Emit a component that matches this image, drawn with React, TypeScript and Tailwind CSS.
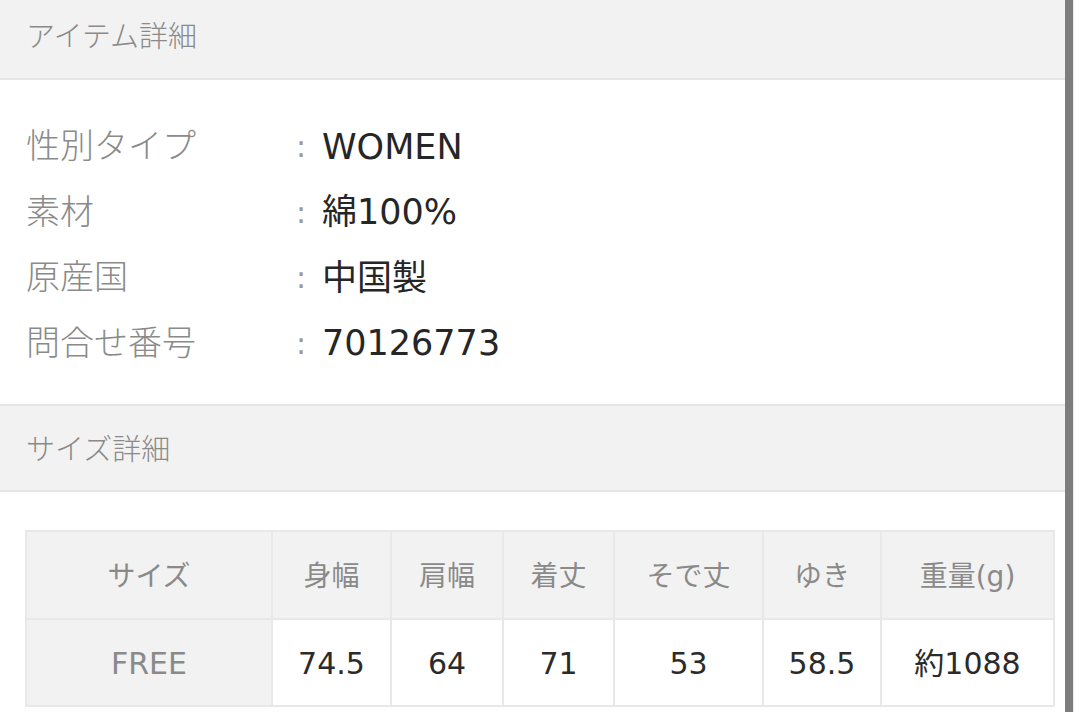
const details = [
  { label: '性別タイプ', value: 'WOMEN' },
  { label: '素材', value: '綿100%' },
  { label: '原産国', value: '中国製' },
  { label: '問合せ番号', value: '70126773' },
];

const columns = [
  { name: 'サイズ', w: 'w-[246px]' },
  { name: '身幅', w: 'w-[119px]' },
  { name: '肩幅', w: 'w-[112px]' },
  { name: '着丈', w: 'w-[111px]' },
  { name: 'そで丈', w: 'w-[149px]' },
  { name: 'ゆき', w: 'w-[118px]' },
  { name: '重量(g)', w: 'w-[173px]' },
];

const sizes = [['FREE', '74.5', '64', '71', '53', '58.5', '約1088']];

export default function App() {
  return (
    <div
      className="flex h-[712px] w-[1080px] overflow-hidden bg-white"
      style={{ fontFamily: '"DejaVu Sans", "Noto Sans CJK JP", sans-serif' }}
    >
      <main className="w-[1065px] shrink-0">
        <div className="flex h-[80px] items-center border-b-2 border-[#e6e6e6] bg-[#f2f2f2] px-[26px] pb-[2px] text-[29px] font-light text-[#8a8a8a]">
          アイテム詳細
        </div>

        <div className="px-[26px] pb-[28px] pt-[34px]">
          {details.map((d) => (
            <div key={d.label} className="flex h-[65.5px] items-center text-[34px]">
              <span className="w-[270px] font-light text-[#8a8a8a]">{d.label}</span>
              <span className="w-[26px] text-[30px] text-[#9a9a9a]">:</span>
              <span className="text-[35px] text-[#262626]">{d.value}</span>
            </div>
          ))}
        </div>

        <div className="flex h-[88px] items-center border-y-2 border-[#e6e6e6] bg-[#f2f2f2] px-[26px] pt-[6px] text-[29px] font-light text-[#8a8a8a]">
          サイズ詳細
        </div>

        <div className="px-[25px] pt-[38px]">
          <table className="w-[1028px] table-fixed border-collapse text-center">
            <thead>
              <tr className="h-[88px] bg-[#f2f2f2] text-[28px] text-[#8a8a8a]">
                {columns.map((c) => (
                  <th key={c.name} className={`${c.w} border-2 border-[#e8e8e8] pt-[4px] font-normal`}>
                    {c.name}
                  </th>
                ))}
              </tr>
            </thead>
            <tbody>
              {sizes.map((row) => (
                <tr key={row[0]} className="h-[87px] text-[30px]">
                  {row.map((cell, i) => (
                    <td
                      key={i}
                      className={`border-2 border-[#e8e8e8] pt-[2px] ${
                        i === 0 ? 'bg-[#f2f2f2] text-[#8a8a8a]' : 'text-[#2b2b2b]'
                      }`}
                    >
                      {cell}
                    </td>
                  ))}
                </tr>
              ))}
            </tbody>
          </table>
        </div>
      </main>
      <div className="w-[8px] shrink-0 bg-[#7d7d7d]" />
      <div className="flex-1 border-l border-[#ececec] bg-white" />
    </div>
  );
}
